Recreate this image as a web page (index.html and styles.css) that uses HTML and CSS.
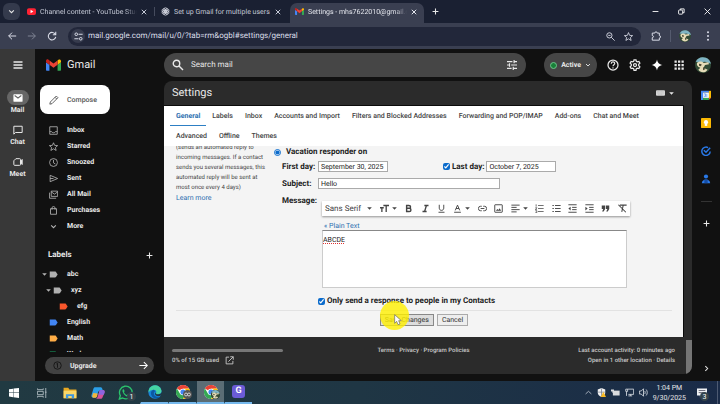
FILE: index.html
```html
<!DOCTYPE html>
<html lang="en">
<head>
  <meta charset="UTF-8">
  <meta name="viewport" content="width=device-width, initial-scale=1.0">
  <title>Settings - Gmail</title>
  <link rel="stylesheet" href="styles.css">
</head>
<body>
  <!-- Shared icons -->
  <svg class="sprite" aria-hidden="true">
    <symbol id="i-close" viewBox="0 0 24 24"><path d="M3 3l18 18M21 3L3 21" fill="none" stroke="currentColor" stroke-width="4"/></symbol>
    <symbol id="i-plus" viewBox="0 0 24 24"><path d="M12 2v20M2 12h20" fill="none" stroke="currentColor" stroke-width="3.6"/></symbol>
    <symbol id="i-down" viewBox="0 0 24 24"><path d="M4 8l8 8 8-8" fill="none" stroke="currentColor" stroke-width="3.6"/></symbol>
    <symbol id="i-caret" viewBox="0 0 24 24"><path d="M1 6h22l-11 12z" fill="currentColor"/></symbol>
    <symbol id="i-tag" viewBox="0 0 24 24"><path d="M2 4h14c1 0 2 .4 2.600 1.200L23 12l-4.400 6.800C18 19.600 17 20 16 20H2z" fill="currentColor"/></symbol>
    <symbol id="i-gmail" viewBox="0 0 24 18">
      <path fill="#4285f4" d="M1.600 18h3.900V8.600L0 4.400v12C0 17.300.7 18 1.600 18z"/>
      <path fill="#34a853" d="M18.500 18h3.900c.9 0 1.600-.7 1.600-1.600v-12l-5.500 4.200z"/>
      <path fill="#fbbc04" d="M18.500 1.600v7L24 4.400V2.500c0-2.100-2.300-3.200-4-2z"/>
      <path fill="#ea4335" d="M5.500 8.600v-7L12 6.500l6.500-4.900v7L12 13.500z"/>
      <path fill="#c5221f" d="M0 2.500v1.900l5.500 4.200v-7L4 .5C2.300-.8 0 .4 0 2.500z"/>
    </symbol>
    <symbol id="i-avatar" viewBox="0 0 24 24">
      <circle cx="12" cy="12" r="12" fill="#314a35"/>
      <path d="M1 7C4 1 10-1 16 1c4 1 7 5 8 9l-9-3-7 1z" fill="#7fb4c4"/>
      <path d="M3 9c3-3 8-3 10 0l7-1 1 3-6 1-2 4 6 3-3 3c-5 2-9 0-11-3l3-3c-4-1-6-4-5-7z" fill="#e6dcb8"/>
      <path d="M6 10l4 1-1 3-3-1zM12 15l4 3-4 2z" fill="#4b4a35"/>
    </symbol>
    <symbol id="i-chrome" viewBox="0 0 24 24">
      <circle cx="12" cy="12" r="12" fill="#fff"/>
      <path d="M12 12L1.600 6A12 12 0 0 1 22.400 6L12 6.500z" fill="#ea4335"/>
      <path d="M1.600 6A12 12 0 0 0 12 24l5-9-5 2-5-2z" fill="#34a853"/>
      <path d="M22.400 6A12 12 0 0 1 12 24l5.200-9-.2-6-5-2.500z" fill="#fbbc04"/>
      <circle cx="12" cy="12" r="5.600" fill="#fff"/><circle cx="12" cy="12" r="4.400" fill="#4285f4"/>
    </symbol>
  </svg>

  <!-- Browser tabs -->
  <div class="tab-strip">
    <button class="tab-search" aria-label="Search tabs"><svg class="s7"><use href="#i-down"/></svg></button>
    <div class="tab">
      <svg class="s9" viewBox="0 0 24 24"><rect y="3" width="24" height="18" rx="5" fill="#f23"/><path d="M9.500 7.500v9l7.500-4.500z" fill="#fff"/></svg>
      <span class="tab-title">Channel content - YouTube Studio</span>
      <button aria-label="Close tab"><svg class="s6"><use href="#i-close"/></svg></button>
    </div>
    <div class="tab divided">
      <svg class="s9" viewBox="0 0 24 24" fill="none" stroke="#d5d8e2" stroke-width="2"><ellipse cx="12" cy="8" rx="5" ry="6"/><ellipse cx="12" cy="8" rx="5" ry="6" transform="rotate(60 12 12)"/><ellipse cx="12" cy="8" rx="5" ry="6" transform="rotate(120 12 12)"/><ellipse cx="12" cy="8" rx="5" ry="6" transform="rotate(180 12 12)"/><ellipse cx="12" cy="8" rx="5" ry="6" transform="rotate(240 12 12)"/><ellipse cx="12" cy="8" rx="5" ry="6" transform="rotate(300 12 12)"/></svg>
      <span class="tab-title">Set up Gmail for multiple users</span>
      <button aria-label="Close tab"><svg class="s6"><use href="#i-close"/></svg></button>
    </div>
    <div class="tab active">
      <svg class="s9"><use href="#i-gmail"/></svg>
      <span class="tab-title">Settings - mhs7622010@gmail.com</span>
      <button aria-label="Close tab"><svg class="s6"><use href="#i-close"/></svg></button>
    </div>
    <button class="new-tab" aria-label="New tab"><svg class="s7"><use href="#i-plus"/></svg></button>
    <div class="window-controls">
      <button aria-label="Minimize"><svg class="s7" viewBox="0 0 24 24"><path d="M2 12h20" stroke="#fff" stroke-width="3"/></svg></button>
      <button aria-label="Restore"><svg class="s7" viewBox="0 0 24 24" fill="none" stroke="#fff" stroke-width="3"><rect x="2" y="7" width="14" height="14" rx="2"/><path d="M8 7V3h13v13h-5"/></svg></button>
      <button aria-label="Close"><svg class="s7" viewBox="0 0 24 24"><path d="M2 2l20 20M22 2L2 22" stroke="#fff" stroke-width="3"/></svg></button>
    </div>
  </div>

  <div class="toolbar">
    <button aria-label="Back"><svg class="s10" viewBox="0 0 24 24"><path d="M22 12H4M12 4l-8 8 8 8" fill="none" stroke="currentColor" stroke-width="2.400"/></svg></button>
    <button class="dim" aria-label="Forward"><svg class="s10" viewBox="0 0 24 24"><path d="M2 12h18M12 4l8 8-8 8" fill="none" stroke="currentColor" stroke-width="2.400"/></svg></button>
    <button aria-label="Reload"><svg class="s10" viewBox="0 0 24 24"><path d="M20 8a9 9 0 1 0 1 6M21 2v7h-7" fill="none" stroke="currentColor" stroke-width="2.600"/></svg></button>
    <div class="address">
      <button class="site-info" aria-label="Site information"><svg class="s9" viewBox="0 0 24 24" fill="none" stroke="currentColor" stroke-width="2.600"><circle cx="6" cy="6" r="3.500"/><path d="M12 6h11M1 18h11"/><circle cx="18" cy="18" r="3.500"/></svg></button>
      <input type="text" aria-label="Address" value="mail.google.com/mail/u/0/?tab=rm&amp;ogbl#settings/general">
      <button aria-label="Zoom"><svg class="s9" viewBox="0 0 24 24" fill="none" stroke="currentColor" stroke-width="2.400"><circle cx="9" cy="9" r="7"/><path d="M14 14l9 9M6 9h6"/></svg></button>
      <button aria-label="Bookmark"><svg class="s9" viewBox="0 0 24 24" fill="none" stroke="currentColor" stroke-width="2.200"><path d="M12 1.500l3 7.500 8 .6-6 5.200 2 7.700-7-4.300-7 4.300 2-7.700-6-5.200L9 9z"/></svg></button>
    </div>
    <button class="extensions" aria-label="Extensions"><svg class="s10" viewBox="0 0 24 24" fill="none" stroke="currentColor" stroke-width="2.400"><path d="M3 5h6c0-4 6-4 6 0h5v6c4 0 4 6 0 6v5H3v-6c4 0 4-5 0-5z"/></svg></button>
    <button class="profile" aria-label="Profile"><svg class="s12"><use href="#i-avatar"/></svg></button>
    <button aria-label="Menu"><svg class="s10" viewBox="0 0 24 24" fill="currentColor"><circle cx="12" cy="3" r="2.400"/><circle cx="12" cy="12" r="2.400"/><circle cx="12" cy="21" r="2.400"/></svg></button>
  </div>

  <div class="app">
    <!-- Left rail -->
    <nav class="rail">
      <button class="menu-btn" aria-label="Main menu"><svg class="s12" viewBox="0 0 24 24"><path d="M3 6h18M3 12h18M3 18h18" stroke="currentColor" stroke-width="2.600"/></svg></button>
      <a href="#" class="selected"><span class="rail-icon"><svg class="s10" viewBox="0 0 24 24"><rect x="1" y="3" width="22" height="18" rx="2" fill="#fff"/><path d="M4 6l8 6 8-6" fill="none" stroke="#666" stroke-width="2.500"/></svg></span>Mail</a>
      <a href="#"><span class="rail-icon"><svg class="s10" viewBox="0 0 24 24"><path d="M2 22V3h20v15H6z" fill="none" stroke="currentColor" stroke-width="2.400"/></svg></span>Chat</a>
      <a href="#"><span class="rail-icon"><svg class="s10" viewBox="0 0 24 24" fill="none" stroke="currentColor" stroke-width="2.400"><path d="M7 4h9a2 2 0 0 1 2 2v12a2 2 0 0 1-2 2H4a2 2 0 0 1-2-2V9z"/><path d="M18 10l4-4v12l-4-4z" fill="currentColor"/></svg></span>Meet</a>
    </nav>

    <header class="header">
      <a href="#" class="brand"><svg class="brand-logo"><use href="#i-gmail"/></svg>Gmail</a>
      <div class="search">
        <svg class="s12" viewBox="0 0 24 24" fill="none" stroke="currentColor" stroke-width="2.800"><circle cx="9" cy="9" r="6.500"/><path d="M14 14l8 8"/></svg>
        <input type="text" aria-label="Search mail" placeholder="Search mail">
        <button aria-label="Search options"><svg class="s10" viewBox="0 0 24 24"><path d="M0 4h13M17 4h7M17 0v8M0 12h6M10 12h14M6 8v8M0 20h11M15 20h9M15 16v8" stroke="currentColor" stroke-width="2.800"/></svg></button>
      </div>
      <button class="status"><i class="dot"></i>Active<svg class="s6"><use href="#i-down"/></svg></button>
      <div class="header-icons">
        <button aria-label="Support"><svg class="s12" viewBox="0 0 24 24"><circle cx="12" cy="12" r="10" fill="none" stroke="currentColor" stroke-width="2.500"/><path d="M8.500 9.500c0-5 7-4.500 7-.5 0 2.500-3.500 2.500-3.500 5.500M12 16.500v2.500" fill="none" stroke="currentColor" stroke-width="2.300"/></svg></button>
        <button aria-label="Settings"><svg class="s12" viewBox="0 0 24 24" fill="none" stroke="currentColor" stroke-width="2.500"><path d="M10 1.500h4l.7 3.200 2 1.100 3.100-1 2 3.500-2.400 2.200v3l2.400 2.200-2 3.500-3.100-1-2 1.100-.7 3.200h-4l-.7-3.200-2-1.100-3.100 1-2-3.500 2.400-2.200v-3L2.200 8.300l2-3.500 3.100 1 2-1.100z"/><circle cx="12" cy="12" r="3"/></svg></button>
        <button aria-label="Gemini"><svg class="s12" viewBox="0 0 24 24"><path d="M12 1c1.500 7 4 9.500 11 11-7 1.500-9.500 4-11 11-1.500-7-4-9.500-11-11 7-1.500 9.500-4 11-11z" fill="#fff"/></svg></button>
        <button aria-label="Google apps"><svg class="s12" viewBox="0 0 24 24" fill="currentColor"><path d="M3 3h4.500v4.500H3zM10 3h4.500v4.500H10zM17 3h4.500v4.500H17zM3 10h4.500v4.500H3zM10 10h4.500v4.500H10zM17 10h4.500v4.500H17zM3 17h4.500v4.500H3zM10 17h4.500v4.500H10zM17 17h4.500v4.500H17z"/></svg></button>
      </div>
      <button class="account" aria-label="Account"><svg class="s16"><use href="#i-avatar"/></svg></button>
    </header>

    <!-- Folders and labels -->
    <aside class="sidebar">
      <button class="compose"><svg class="s10" viewBox="0 0 24 24"><path d="M2 22l1.200-5.200L17.500 2.500l4 4L7.200 20.800z M14.500 5.500l4 4" fill="none" stroke="currentColor" stroke-width="2.200"/></svg>Compose</button>
      <nav class="folders">
        <a href="#"><svg class="s9" viewBox="0 0 24 24" fill="none" stroke="currentColor" stroke-width="2.200"><path d="M2 2h20v20H2zM2 15h5c1 4 9 4 10 0h5"/></svg>Inbox</a>
        <a href="#"><svg class="s9" viewBox="0 0 24 24" fill="none" stroke="currentColor" stroke-width="2.200"><path d="M12 2l3 7 8 .6-6 5.200 2 7.700-7-4.300-7 4.300 2-7.700-6-5.200L9 9z"/></svg>Starred</a>
        <a href="#"><svg class="s9" viewBox="0 0 24 24" fill="none" stroke="currentColor" stroke-width="2.200"><circle cx="12" cy="12" r="10.500"/><path d="M12 5v8l5 3"/></svg>Snoozed</a>
        <a href="#"><svg class="s9" viewBox="0 0 24 24" fill="none" stroke="currentColor" stroke-width="2.200"><path d="M3 3.500L23 12 3 20.500zM3 12h9"/></svg>Sent</a>
        <a href="#"><svg class="s9" viewBox="0 0 24 24" fill="none" stroke="currentColor" stroke-width="2.200"><path d="M6 3h17v14H6zM6 5l8.500 6L23 5M1.500 7v15H19"/></svg>All Mail</a>
        <a href="#"><svg class="s9" viewBox="0 0 24 24" fill="none" stroke="currentColor" stroke-width="2.200"><path d="M4 7h16v15H4zM8 10V5c0-5 8-5 8 0v5"/></svg>Purchases</a>
        <a href="#"><svg class="s7"><use href="#i-down"/></svg>More</a>
      </nav>
      <div class="labels-head"><h2>Labels</h2><button aria-label="Create new label"><svg class="s7"><use href="#i-plus"/></svg></button></div>
      <nav class="folders labels">
        <a href="#" class="parent"><svg class="s5"><use href="#i-caret"/></svg><svg class="s9 gray"><use href="#i-tag"/></svg>abc</a>
        <a href="#" class="parent level-1"><svg class="s5"><use href="#i-caret"/></svg><svg class="s9 gray"><use href="#i-tag"/></svg>xyz</a>
        <a href="#" class="level-2"><svg class="s9 red"><use href="#i-tag"/></svg>efg</a>
        <a href="#"><svg class="s9 blue"><use href="#i-tag"/></svg>English</a>
        <a href="#"><svg class="s9 orange"><use href="#i-tag"/></svg>Math</a>
        <a href="#"><svg class="s9 green"><use href="#i-tag"/></svg>Work</a>
      </nav>
      <button class="upgrade">
        <svg class="s9" viewBox="0 0 24 24" fill="none" stroke="#151515" stroke-width="2.400"><circle cx="12" cy="12" r="10"/><path d="M9 8l3-2v12"/></svg>
        <span>Upgrade</span>
        <svg class="s9" viewBox="0 0 24 24"><path d="M1 12h20M13 3l9 9-9 9" fill="none" stroke="#fff" stroke-width="2.800"/></svg>
      </button>
    </aside>

    <main class="panel">
      <div class="panel-head">
        <h1>Settings</h1>
        <button aria-label="Input tools"><svg class="keyboard" viewBox="0 0 20 12"><rect width="20" height="12" rx="2" fill="#d6d6d6"/><path d="M2 3h16M2 6h16M5 9h10" stroke="#aaa" stroke-dasharray="2 1"/></svg><svg class="s5"><use href="#i-caret"/></svg></button>
      </div>

      <div class="settings">
        <nav class="settings-tabs">
          <a href="#" class="current">General</a>
          <a href="#">Labels</a>
          <a href="#">Inbox</a>
          <a href="#">Accounts and Import</a>
          <a href="#">Filters and Blocked Addresses</a>
          <a href="#">Forwarding and POP/IMAP</a>
          <a href="#">Add-ons</a>
          <a href="#">Chat and Meet</a>
          <a href="#">Advanced</a>
          <a href="#">Offline</a>
          <a href="#">Themes</a>
        </nav>

        <form class="settings-form">
          <div class="vacation">
            <p class="hint">(sends an automated reply to incoming messages. If a contact sends you several messages, this automated reply will be sent at most once every 4 days)<br><a href="#">Learn more</a></p>
            <div class="fields">
              <div class="radio-row">
                <input type="radio" id="vacationOn" name="vacation" checked>
                <label for="vacationOn">Vacation responder on</label>
              </div>
              <div class="field-row">
                <label for="firstDay">First day:</label>
                <input type="text" class="date" id="firstDay" value="September 30, 2025">
                <div class="last-day">
                  <input type="checkbox" id="useLastDay" checked aria-label="Use last day">
                  <label for="lastDay">Last day:</label>
                  <input type="text" class="date" id="lastDay" value="October 7, 2025">
                </div>
              </div>
              <div class="field-row">
                <label for="subject">Subject:</label>
                <input type="text" class="subject" id="subject" value="Hello">
              </div>
              <div class="field-row message-row">
                <label for="message">Message:</label>
                <div class="editor">
                  <div class="format-bar">
                    <button type="button" class="font-name">Sans Serif<svg class="s5"><use href="#i-caret"/></svg></button>
                    <button type="button" aria-label="Size"><svg class="s9" viewBox="0 0 24 24"><path d="M9 4h15M16.500 4v17M0 10h10M5 10v11" stroke="currentColor" stroke-width="3.500"/></svg><svg class="s5"><use href="#i-caret"/></svg></button>
                    <button type="button" aria-label="Bold"><svg class="s9" viewBox="0 0 24 24"><path d="M7 4h6c6 0 6 7.500 0 7.500H7zM7 11.500h7c6 0 6 8.500 0 8.500H7z" fill="none" stroke="currentColor" stroke-width="3.800"/></svg></button>
                    <button type="button" aria-label="Italic"><svg class="s9" viewBox="0 0 24 24"><path d="M9 4h11M4 20h11M14.500 4l-5 16" stroke="currentColor" stroke-width="3.500"/></svg></button>
                    <button type="button" aria-label="Underline"><svg class="s9" viewBox="0 0 24 24"><path d="M6 2v9c0 8 12 8 12 0V2M4 22h16" fill="none" stroke="currentColor" stroke-width="2.500"/></svg></button>
                    <button type="button" aria-label="Text color"><svg class="s9" viewBox="0 0 24 24"><path d="M6 17l6-14 6 14M8 12h8M3 22h18" fill="none" stroke="currentColor" stroke-width="2.500"/></svg><svg class="s5"><use href="#i-caret"/></svg></button>
                    <button type="button" aria-label="Link"><svg class="s9" viewBox="0 0 24 24"><path d="M10 6H7a6 6 0 0 0 0 12h3M14 6h3a6 6 0 0 1 0 12h-3M7 12h10" fill="none" stroke="currentColor" stroke-width="2.500"/></svg></button>
                    <button type="button" aria-label="Insert image"><svg class="s9" viewBox="0 0 24 24"><rect x="2" y="2" width="20" height="20" rx="1" fill="none" stroke="currentColor" stroke-width="2.500"/><path d="M5 18l4-5 3 3 3-5 4 7z" fill="currentColor"/></svg></button>
                    <button type="button" aria-label="Align"><svg class="s9" viewBox="0 0 24 24"><path d="M1 3h22M1 9h14M1 15h22M1 21h14" stroke="currentColor" stroke-width="2.500"/></svg><svg class="s5"><use href="#i-caret"/></svg></button>
                    <button type="button" aria-label="Numbered list"><svg class="s9" viewBox="0 0 24 24"><path d="M8 4h15M8 12h15M8 20h15M3 1v6M1 10h4l-4 5h4M1 18h4v5H1" fill="none" stroke="currentColor" stroke-width="2"/></svg></button>
                    <button type="button" aria-label="Bulleted list"><svg class="s9" viewBox="0 0 24 24"><path d="M8 4h15M8 12h15M8 20h15M1 4h4M1 12h4M1 20h4" stroke="currentColor" stroke-width="2.500"/></svg></button>
                    <button type="button" aria-label="Indent less"><svg class="s9" viewBox="0 0 24 24"><path d="M1 2h22M11 9h12M11 15h12M1 22h22" stroke="currentColor" stroke-width="2.500"/><path d="M7 7v10l-6-5z" fill="currentColor"/></svg></button>
                    <button type="button" aria-label="Indent more"><svg class="s9" viewBox="0 0 24 24"><path d="M1 2h22M11 9h12M11 15h12M1 22h22" stroke="currentColor" stroke-width="2.500"/><path d="M1 7v10l6-5z" fill="currentColor"/></svg></button>
                    <button type="button" aria-label="Quote"><svg class="s9" viewBox="0 0 24 24"><path d="M2 4h9v9l-4 7H3l3-7H2zM13 4h9v9l-4 7h-4l3-7h-4z" fill="currentColor"/></svg></button>
                    <button type="button" aria-label="Remove formatting"><svg class="s9" viewBox="0 0 24 24"><path d="M5 3h18M14 3l-4 18M1 2l20 20" fill="none" stroke="currentColor" stroke-width="2.800"/></svg></button>
                  </div>
                  <a href="#" class="plain-text">« Plain Text</a>
                  <textarea id="message" spellcheck="false">ABCDE</textarea>
                </div>
              </div>
              <div class="contacts-row">
                <input type="checkbox" id="contactsOnly" checked>
                <label for="contactsOnly">Only send a response to people in my Contacts</label>
              </div>
            </div>
          </div>
          <div class="actions">
            <button type="button" class="save">Save Changes</button>
            <button type="button">Cancel</button>
            <!-- Click highlight and pointer -->
            <span class="click-spot"></span>
            <svg class="pointer" viewBox="0 0 12 18"><path d="M1 1v13l3-3 2 5 3-1-2-5h4z" fill="#fff" stroke="#666" stroke-width="1"/></svg>
          </div>
        </form>
      </div>

      <footer class="footer">
        <div class="storage">
          <div class="storage-bar"></div>
          <a href="#">0% of 15 GB used <svg class="s9" viewBox="0 0 24 24"><path d="M11 3H3v18h18v-8M14 2h8v8M22 2L9 15" fill="none" stroke="currentColor" stroke-width="2.400"/></svg></a>
        </div>
        <div class="legal"><a href="#">Terms</a> · <a href="#">Privacy</a> · <a href="#">Program Policies</a></div>
        <div class="activity">Last account activity: 0 minutes ago<br>Open in 1 other location · <a href="#">Details</a></div>
      </footer>
      <div class="scroll-track"><div class="scroll-thumb"></div></div>
    </main>

    <!-- Add-ons -->
    <aside class="side-panel">
      <button aria-label="Calendar"><svg class="s10" viewBox="0 0 24 24"><path d="M0 2h19v4H5v18H0z" fill="#4285f4"/><path d="M19 2h5v17h-5z" fill="#fbbc04"/><path d="M5 19h14v5H5z" fill="#34a853"/><path d="M19 19h5l-5 5z" fill="#ea4335"/><path d="M5 6h14v13H5z" fill="#fff"/><path d="M7 9h4v7H7M8 12h3M14 9v8" fill="none" stroke="#4285f4" stroke-width="1.600"/></svg></button>
      <button aria-label="Keep"><svg class="s10" viewBox="0 0 24 24"><rect width="24" height="24" rx="2" fill="#fbb904"/><circle cx="12" cy="10" r="5" fill="#fff"/><path d="M9 13h6v6H9z" fill="#fff"/></svg></button>
      <button aria-label="Tasks"><svg class="s10" viewBox="0 0 24 24" fill="none" stroke="#2979e8" stroke-width="3.500"><path d="M17 4a10 10 0 1 0 5 9"/><path d="M7 10l5 5L22 4"/></svg></button>
      <button aria-label="Contacts"><svg class="s10" viewBox="0 0 24 24"><circle cx="12" cy="6" r="5" fill="#2979e8"/><path d="M2 22c0-12 20-12 20 0z" fill="#2979e8"/><path d="M8 13h8v9H8z" fill="#174ea6"/></svg></button>
      <hr>
      <button aria-label="Get add-ons"><svg class="s7"><use href="#i-plus"/></svg></button>
      <button class="hide-panel" aria-label="Hide side panel"><svg class="s7" viewBox="0 0 24 24"><path d="M8 4l8 8-8 8" fill="none" stroke="currentColor" stroke-width="3.500"/></svg></button>
    </aside>
  </div>

  <!-- Windows taskbar -->
  <div class="taskbar">
    <button aria-label="Start"><svg class="s10" viewBox="0 0 24 24" fill="#fff"><path d="M0 3l10-1.500V11H0zM11 1.300L24 0v11H11zM0 12h10v10L0 20.500zM11 12h13v12l-13-1.800z"/></svg></button>
    <button aria-label="Task view"><svg class="s10" viewBox="0 0 24 24" fill="none" stroke="#b9c5ca" stroke-width="2"><path d="M1 1v3h14V1M1 23v-3h14v3M1 8h14v8H1zM21 0v24M19 10h4"/></svg></button>
    <button aria-label="File Explorer"><svg class="s14" viewBox="0 0 24 24"><path d="M1 3h8l2 3h12v15H1z" fill="#e8a922"/><path d="M1 8h22v13H1z" fill="#fbd768"/><path d="M5 21v-7h14v7h-4v-4H9v4z" fill="#3f97dd"/></svg></button>
    <button aria-label="Copilot"><svg class="s14" viewBox="0 0 24 24"><path d="M7 2h9c2 0 3 1 3.500 3l1 3h-5c-2 0-3 1-3.600 3L10 17c-.5 2-1.500 3-3.500 3H4c-3 0-4-2-3-5l3-10c.6-2 1.500-3 3-3z" fill="#2b9fe8"/><path d="M4 12l-2 5c0 2 1 3 3 3h2c2 0 3-1 3.500-3l1-4z" fill="#f2b53a"/><path d="M17 22H8c2-.5 3-2 3.500-4l2.500-8c.5-1.500 1.500-3 3.500-3H20c3 0 4 2 3 5l-3 7c-.6 2-1.500 3-3 3z" fill="#d6519b"/><path d="M17 7h3c3 0 4 2 3 5l-1 3h-9l1-5c.5-2 1.500-3 3-3z" fill="#8c65df"/></svg></button>
    <button aria-label="WhatsApp"><svg class="s16" viewBox="0 0 24 24"><path d="M2 21l1.500-5A9.500 9.500 0 1 1 7 19.500z" fill="none" stroke="#2bc36c" stroke-width="2"/><path d="M8 6l2 3-1 2c1 2 2 3 4 4l2-1 3 2c-2 4-6 1-8-1S5 8 8 6z" fill="#2bc36c"/></svg><span class="badge">1</span></button>
    <button class="running" aria-label="Edge"><svg class="s14" viewBox="0 0 24 24"><circle cx="12" cy="12" r="11.500" fill="#1683d8"/><path d="M1 9C4-2 20-3 23 9c1 5-3 7-7 7-3 0-3-2-2-3 1-3-1-5-4-5-4 0-8 2-9 5z" fill="#45d4a2"/><path d="M10 8c-5 1-6 6-4 10 2 5 9 7 15 2-6 2-11-1-11-5 0-3 1-4 3-4z" fill="#0c59a4"/><path d="M14 12c-1 2 0 4 2 4 4 0 7-1 8-5v6l-4 2c-4 1-8-1-8-4z" fill="#213944"/></svg></button>
    <button class="running" aria-label="Chrome"><svg class="s14"><use href="#i-chrome"/></svg><span class="badge profile-badge"><svg class="s7" viewBox="0 0 24 24" fill="none" stroke="#ddd" stroke-width="3"><circle cx="7" cy="12" r="5"/><circle cx="17" cy="12" r="5"/></svg></span></button>
    <button class="running focused" aria-label="Chrome, Gmail"><svg class="s14"><use href="#i-chrome"/></svg><span class="badge"><svg class="s9"><use href="#i-avatar"/></svg></span></button>
    <button class="running" aria-label="G app"><span class="g-app">G</span></button>
    <div class="tray">
      <button aria-label="Hidden icons"><svg class="s7" viewBox="0 0 24 24"><path d="M2 17l10-9 10 9" fill="none" stroke="#d4dae2" stroke-width="2.500"/></svg></button>
      <svg class="s9" viewBox="0 0 24 24"><path d="M12 0l10 4v8c0 6-4 10-10 12C6 22 2 18 2 12V4z" fill="#f1f1f1"/><path d="M12 1v22M3 11h18" stroke="#788290" stroke-width="2"/><path d="M17 10l7 14H10z" fill="#f7b923"/></svg>
      <svg class="s9" viewBox="0 0 24 24"><path d="M5 7h18v13H5z" fill="#d9dbdd"/><path d="M0 4h8v9H4V9H0z" fill="#d9dbdd"/></svg>
      <svg class="s9" viewBox="0 0 24 24" fill="none" stroke="#dbe0e6" stroke-width="2.200"><path d="M7 3h16v14H9M2 3h5v6H2zM4 9v12M9 21h10M15 17v4"/></svg>
      <svg class="s9" viewBox="0 0 24 24" fill="none" stroke="#dbe0e6" stroke-width="2.200"><path d="M1 8h5l6-6v20l-6-6H1zM15 8c2 2 2 6 0 8M19 4c4 4 4 12 0 16"/></svg>
      <div class="clock">1:04 PM<br>9/30/2025</div>
      <button class="notifications" aria-label="3 notifications"><svg class="s10" viewBox="0 0 24 24"><path d="M0 1h24v17H12l-5 5v-5H0z" fill="#eef0f3"/><path d="M4 6h16M4 11h12" stroke="#556" stroke-width="2"/></svg><span class="badge">3</span></button>
    </div>
  </div>
</body>
</html>
```
FILE: styles.css
```css
* {
  box-sizing: border-box;
}

body {
  margin: 0;
  height: 100vh;
  display: flex;
  flex-direction: column;
  overflow: hidden;
  font-family: Roboto, Arial, sans-serif;
  font-size: 8px;
  line-height: 10px;
  text-rendering: geometricPrecision;
  background: #111;
  color: #e8e8e8;
}

button,
input,
textarea {
  font: inherit;
  color: inherit;
  text-rendering: inherit;
  margin: 0;
  padding: 0;
  border: none;
  background: none;
}

button {
  display: flex;
  align-items: center;
  justify-content: center;
  cursor: pointer;
}

input {
  outline: none;
  min-width: 0;
}

a {
  color: inherit;
  text-decoration: none;
}

svg {
  display: block;
  flex: none;
}

h1,
h2,
p {
  margin: 0;
}

.sprite {
  display: none;
}

/* Icon sizes */
.s5 { width: 5px; height: 5px; }
.s6 { width: 6px; height: 6px; }
.s7 { width: 7px; height: 7px; }
.s9 { width: 9px; height: 9px; }
.s10 { width: 10px; height: 10px; }
.s12 { width: 12px; height: 12px; }
.s14 { width: 14px; height: 14px; }
.s16 { width: 16px; height: 16px; }

/* Browser tabs */
.tab-strip {
  display: flex;
  align-items: stretch;
  height: 23px;
  padding: 3px 0 0 3px;
  background: #1a2032;
}

.tab-search {
  width: 17px;
  height: 17px;
  border-radius: 6px;
  background: #343a4c;
}

.tab {
  display: flex;
  align-items: center;
  gap: 4px;
  flex: 0 1 134px;
  min-width: 0;
  padding: 0 7px 3px;
  color: #c3c7d4;
}

.tab.active {
  margin-left: 2px;
  padding-left: 5px;
  border-radius: 7px 7px 0 0;
  background: #3a3f51;
  color: #e3e5ec;
}

.tab-title {
  flex: 1;
  overflow: hidden;
  font-size: 7px;
  white-space: nowrap;
  -webkit-mask-image: linear-gradient(to right, #000 88%, transparent);
  mask-image: linear-gradient(to right, #000 88%, transparent);
}

.tab.divided {
  background: linear-gradient(#454b5d, #454b5d) 0 4px / 1px 9px no-repeat;
}

.tab.divided .tab-title {
  -webkit-mask-image: none;
  mask-image: none;
}

.new-tab {
  width: 22px;
  padding-bottom: 3px;
}

.window-controls {
  display: flex;
  margin-left: auto;
  padding-bottom: 3px;
}

.window-controls button {
  width: 26px;
}

.toolbar {
  display: flex;
  align-items: center;
  height: 26px;
  padding: 0 2px;
  background: #3a3f51;
  color: #dadde8;
}

.toolbar > button {
  width: 20px;
}

.toolbar .dim {
  color: #7f8494;
}

.address {
  display: flex;
  align-items: center;
  flex: 1;
  height: 19px;
  margin: 0 5px 0 6px;
  padding: 0 8px 0 3px;
  gap: 9px;
  border-radius: 10px;
  background: #22273a;
}

.address input {
  flex: 1;
  margin-left: -6px;
}

.site-info {
  width: 14px;
  height: 14px;
  border-radius: 50%;
  background: #363b4d;
}

.toolbar .profile {
  width: 28px;
  margin-left: 4px;
  border-left: 1px solid #555b6e;
}

/* Gmail layout */
.app {
  flex: 1;
  min-height: 0;
  display: grid;
  grid-template-columns: 35px 129px 1fr 28px;
  grid-template-rows: 32px 1fr;
}

.rail {
  grid-row: 1 / 3;
  display: flex;
  flex-direction: column;
  align-items: center;
  background: #383838;
  font-size: 7px;
  font-weight: 700;
}

.menu-btn {
  height: 32px;
  margin-bottom: 9px;
}

.rail a {
  display: flex;
  flex-direction: column;
  align-items: center;
  height: 32px;
}

.rail-icon {
  display: flex;
  align-items: center;
  justify-content: center;
  width: 22px;
  height: 15px;
  border-radius: 8px;
}

.selected .rail-icon {
  background: #666;
}

.header {
  grid-column: 2 / 5;
  display: flex;
  align-items: center;
}

.brand {
  display: flex;
  align-items: center;
  gap: 6px;
  width: 129px;
  padding-left: 11px;
  font-size: 11px;
  line-height: 16px;
}

.brand-logo {
  width: 15px;
  height: 12px;
}

.search {
  flex: 1;
  display: flex;
  align-items: center;
  gap: 7px;
  height: 24px;
  padding: 0 9px 0 8px;
  border-radius: 12px;
  background: #464646;
}

.search input {
  flex: 1;
}

.search input::placeholder {
  color: #e4e4e4;
  opacity: 1;
}

.status {
  gap: 4px;
  height: 24px;
  margin-left: 18px;
  padding: 0 6px;
  border-radius: 12px;
  background: #464646;
  font-size: 7px;
  font-weight: 700;
}

.dot {
  width: 7px;
  height: 7px;
  border: 1px solid #6dc58c;
  border-radius: 50%;
  background: #188038;
}

.header-icons {
  display: flex;
  gap: 10px;
  margin-left: 10px;
}

.account {
  margin: 0 9px 0 10px;
}

/* Sidebar */
.sidebar {
  display: flex;
  flex-direction: column;
  min-height: 0;
  padding: 4px 10px 7px 5px;
  font-size: 7px;
  font-weight: 700;
}

.compose {
  align-self: flex-start;
  gap: 8px;
  height: 29px;
  margin-bottom: 8px;
  padding: 0 13px 0 9px;
  border-radius: 8px;
  background: #fff;
  color: #555;
  font-weight: 500;
}

.folders a {
  display: flex;
  align-items: center;
  gap: 9px;
  height: 16px;
  padding-left: 9px;
}

.folders svg {
  color: #b5b5b5;
}

.folders a svg.s7 {
  margin: 0 1px;
}

.labels-head {
  display: flex;
  align-items: center;
  justify-content: space-between;
  height: 18px;
  margin: 12px 1px 0 8px;
}

.labels-head h2 {
  font-size: 8px;
  font-weight: 700;
}

.labels {
  flex: 1;
  min-height: 0;
  margin: 2px 0 5px;
  overflow: hidden;
}

.labels .parent {
  gap: 2px;
  padding-left: 2px;
}

.labels .parent .s9 {
  margin-right: 7px;
}

.labels .level-1 {
  padding-left: 6px;
}

.labels .level-2 {
  padding-left: 19px;
}

.labels .gray { color: #b0b0b0; }
.labels .red { color: #f9562b; }
.labels .blue { color: #4285f4; }
.labels .orange { color: #ffad46; }
.labels .green { color: #16a766; }

.upgrade {
  gap: 8px;
  height: 17px;
  margin-left: 5px;
  padding: 0 6px 0 8px;
  border-radius: 9px;
  background: #424242;
}

.upgrade span {
  flex: 1;
  text-align: left;
}

/* Settings panel */
.panel {
  display: grid;
  grid-template-columns: 1fr 8px;
  grid-template-rows: 24px 1fr 37px;
  min-height: 0;
  margin-bottom: 7px;
  border-radius: 8px;
  overflow: hidden;
  background: #2b2b2b;
}

.panel-head {
  display: flex;
  align-items: center;
  justify-content: space-between;
  padding: 0 10px 0 8px;
}

.panel-head h1 {
  font-size: 11px;
  font-weight: 400;
}

.panel-head button {
  gap: 4px;
}

.keyboard {
  width: 9px;
  height: 6px;
}

.settings {
  grid-row: 2;
  display: flex;
  flex-direction: column;
  min-height: 0;
  border-top: 1px solid #0b0b0b;
  border-right: 1px solid #0b0b0b;
  background: #f4f4f4;
  color: #222;
}

.settings-tabs {
  display: flex;
  flex-wrap: wrap;
  padding: 0 28px 0 6px;
  background: #fff;
  color: #444;
  font-size: 7px;
  font-weight: 500;
}

.settings-tabs a {
  height: 20px;
  padding: 5px 6px;
}

.settings-tabs .current {
  border-bottom: 1px solid #2d7fc4;
  color: #2d6fb0;
  font-weight: 700;
}

.settings-form {
  flex: 1;
  min-height: 0;
  overflow: hidden;
  padding: 0 11px 0 12px;
}

.vacation {
  display: grid;
  grid-template-columns: 98px 1fr;
  border-bottom: 1px solid #e2e2e2;
}

.hint {
  margin-top: -3px;
  padding-right: 6px;
  color: #444;
  font-size: 6px;
}

.hint a {
  font-size: 7px;
}

.hint a,
.plain-text {
  color: #2d6fb0;
}

.fields label {
  font-weight: 700;
}

.fields input[type="radio"],
.fields input[type="checkbox"] {
  width: 7px;
  height: 7px;
  accent-color: #0b6bcb;
}

.radio-row {
  display: flex;
  align-items: center;
  gap: 5px;
  height: 12px;
}

.field-row {
  display: flex;
  align-items: center;
  height: 17px;
  padding-left: 8px;
}

.field-row > label {
  width: 36px;
}

.date,
.subject {
  height: 11px;
  padding: 0 2px;
  border: 1px solid #aaa;
  background: #fff;
  font-size: 7px;
}

.date {
  width: 70px;
}

.subject {
  width: 182px;
}

.last-day {
  display: flex;
  align-items: center;
  gap: 2px;
  margin-left: 55px;
}

.message-row {
  align-items: flex-start;
  height: auto;
  padding-top: 4px;
}

.editor {
  flex: 1;
  max-width: 312px;
  padding: 5px 0 0 4px;
}

.format-bar {
  display: flex;
  align-items: center;
  justify-content: space-between;
  height: 15px;
  padding: 0 3px;
  background: #fff;
  box-shadow: 0 1px 2px rgba(0, 0, 0, 0.4);
  color: #444;
}

.format-bar button {
  height: 9px;
  gap: 3px;
}

.format-bar .font-name {
  gap: 6px;
}

.plain-text {
  display: block;
  height: 14px;
  padding: 5px 2px 0;
  font-size: 7px;
}

.editor textarea {
  display: block;
  width: calc(100% - 3px);
  height: 58px;
  padding: 4px 0;
  border: 1px solid #ccc;
  border-top-color: #888;
  background: #fff;
  font-size: 7px;
  resize: none;
  outline: none;
  text-decoration: underline dotted #d33;
}

.contacts-row {
  display: flex;
  align-items: center;
  gap: 2px;
  margin: 8px 0 4px;
  padding-left: 44px;
}

.actions {
  position: relative;
  display: flex;
  justify-content: center;
  gap: 3px;
  width: 100%;
  padding-top: 3px;
}

.actions button {
  height: 12px;
  padding: 0 4px;
  border: 1px solid #aaa;
  background: #eee;
  color: #333;
  font-size: 7px;
}

.actions .save {
  border-color: #888;
  background: #ddd;
}

.click-spot {
  position: absolute;
  top: -10px;
  left: calc(50% - 44px);
  width: 29px;
  height: 29px;
  border-radius: 50%;
  background: rgba(255, 240, 0, 0.8);
}

.pointer {
  position: absolute;
  top: 3px;
  left: calc(50% - 30px);
  width: 8px;
  height: 12px;
}

.footer {
  grid-row: 3;
  display: grid;
  grid-template-columns: 1fr 1fr 1fr;
  padding: 9px 9px 0 8px;
  font-size: 6px;
  font-weight: 500;
  color: #c9c9c9;
}

.storage-bar {
  width: 111px;
  max-width: 100%;
  height: 3px;
  margin: 3px 0 4px;
  border-radius: 2px;
  background: #777;
}

.storage a {
  display: flex;
  gap: 6px;
}

.legal {
  text-align: center;
  white-space: nowrap;
}

.activity {
  text-align: right;
  white-space: nowrap;
}

.scroll-track {
  grid-column: 2;
  grid-row: 2 / 4;
  display: flex;
  align-items: flex-end;
  justify-content: flex-end;
}

.scroll-thumb {
  width: 6px;
  height: 34px;
  background: #757575;
}

/* Side panel */
.side-panel {
  display: flex;
  flex-direction: column;
  align-items: center;
  gap: 18px;
  padding: 9px 0;
}

.side-panel hr {
  width: 11px;
  margin: -1px 0 0;
  border: none;
  border-top: 1px solid #333;
}

.hide-panel {
  margin-top: auto;
}

/* Taskbar */
.taskbar {
  display: flex;
  height: 23px;
  background: linear-gradient(to right, #213a42, #1f3644 50%, #1a2b48);
}

.taskbar > button {
  position: relative;
  width: 28px;
}

.taskbar .running {
  border-bottom: 2px solid #76b9ed;
  border-left: 1px solid transparent;
  background-clip: padding-box;
}

.taskbar .focused {
  background-color: #5b6d75;
}

.badge {
  position: absolute;
  right: 4px;
  bottom: 3px;
  display: flex;
  align-items: center;
  justify-content: center;
  width: 9px;
  height: 9px;
  border-radius: 50%;
  background: #34434b;
  color: #fff;
  font-size: 7px;
}

.profile-badge {
  background: #555;
}

.g-app {
  width: 13px;
  height: 13px;
  border-radius: 3px;
  background: #6b5bd6;
  color: #fff;
  font-size: 9px;
  font-weight: 700;
  line-height: 13px;
}

.tray {
  display: flex;
  align-items: center;
  gap: 5px;
  margin: 0 2px 0 auto;
  padding-right: 4px;
  border-right: 1px solid #4d5a72;
}

.clock {
  font-size: 7px;
  text-align: center;
}

.notifications {
  position: relative;
  width: 22px;
  height: 23px;
}
```
